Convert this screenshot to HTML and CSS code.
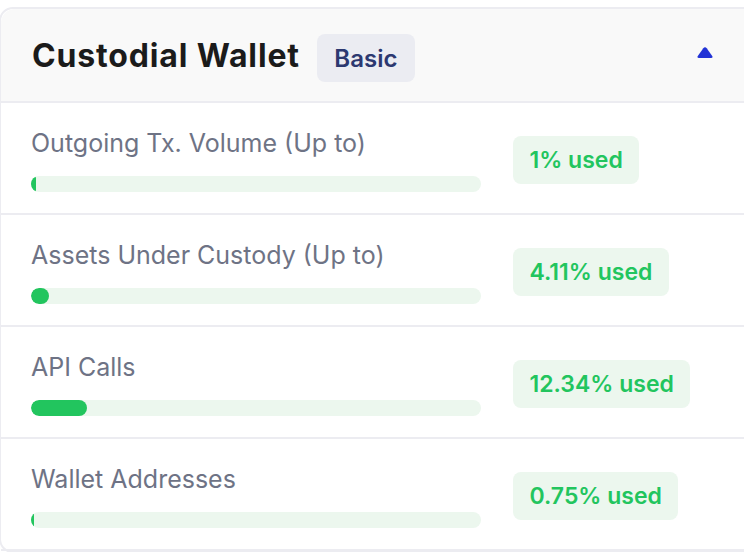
FILE: index.html
```html
<!DOCTYPE html>
<html>
<head>
<meta charset="utf-8">
<link rel="stylesheet" href="styles.css">
</head>
<body>
<div class="card">
  <div class="card-header">
    <div class="title-group">
      <h2 class="title">Custodial Wallet</h2>
      <span class="plan">Basic</span>
    </div>
    <svg class="caret" width="16" height="12" viewBox="0 0 16 12"><path d="M6.3 1.2 Q8 -0.6 9.7 1.2 L15.2 9 Q16.3 11 14 11 L2 11 Q-0.3 11 0.8 9 Z" fill="#2233d6"/></svg>
  </div>
  <div class="row">
    <div class="usage">
      <div class="label">Outgoing Tx. Volume (Up to)</div>
      <div class="track"><div class="fill" style="width:1%"></div></div>
    </div>
    <span class="used">1% used</span>
  </div>
  <div class="row">
    <div class="usage">
      <div class="label">Assets Under Custody (Up to)</div>
      <div class="track"><div class="fill" style="width:4.11%"></div></div>
    </div>
    <span class="used">4.11% used</span>
  </div>
  <div class="row">
    <div class="usage">
      <div class="label">API Calls</div>
      <div class="track"><div class="fill" style="width:12.34%"></div></div>
    </div>
    <span class="used">12.34% used</span>
  </div>
  <div class="row">
    <div class="usage">
      <div class="label">Wallet Addresses</div>
      <div class="track"><div class="fill" style="width:0.75%"></div></div>
    </div>
    <span class="used">0.75% used</span>
  </div>
</div>
</body>
</html>
```
FILE: styles.css
```css
html, body {
  margin: 0;
  padding: 0;
  background: #ffffff;
  overflow: hidden;
}
body {
  font-family: Inter, "Open Sans", sans-serif;
  padding-top: 7px;
}
.card {
  width: 780px;
  border: 2px solid #ececf1;
  border-radius: 14px;
  background: #fff;
  margin-left: -1px;
}
.card-header {
  height: 92px;
  background: #f9f9f9;
  border-bottom: 2px solid #ececf1;
  border-radius: 14px 14px 0 0;
  display: flex;
  align-items: center;
  padding: 0 68px 0 31px;
  justify-content: space-between;
}
.title-group {
  display: flex;
  align-items: center;
  gap: 17px;
}
.title {
  margin: 0;
  font-size: 32px;
  font-weight: 700;
  color: #1b1b1b;
  letter-spacing: 0.85px;
}
.plan {
  display: inline-flex;
  align-items: center;
  justify-content: center;
  width: 98px;
  height: 48px;
  margin-top: 6px;
  border-radius: 8px;
  background: #ebecf2;
  color: #2c3870;
  font-size: 24px;
  font-weight: 600;
}
.caret {
  display: block;
  margin-bottom: 4px;
}
.row {
  height: 110px;
  border-bottom: 2px solid #ececf1;
  display: flex;
  align-items: center;
  padding-left: 30px;
  gap: 32px;
}
.usage {
  width: 450px;
  display: flex;
  flex-direction: column;
  gap: 14px;
}
.label {
  font-size: 25px;
  line-height: 38px;
  color: #6e7385;
}
.track {
  height: 16px;
  border-radius: 8px;
  background: #ecf7ee;
  overflow: hidden;
}
.fill {
  height: 100%;
  min-width: 3px;
  border-radius: 8px;
  background: #22c55e;
}
.used {
  display: inline-flex;
  align-items: center;
  height: 48px;
  margin-top: 4px;
  padding: 0 16.5px;
  border-radius: 8px;
  background: #ecf7ee;
  color: #22c55e;
  font-size: 23px;
  font-weight: 600;
}
```
